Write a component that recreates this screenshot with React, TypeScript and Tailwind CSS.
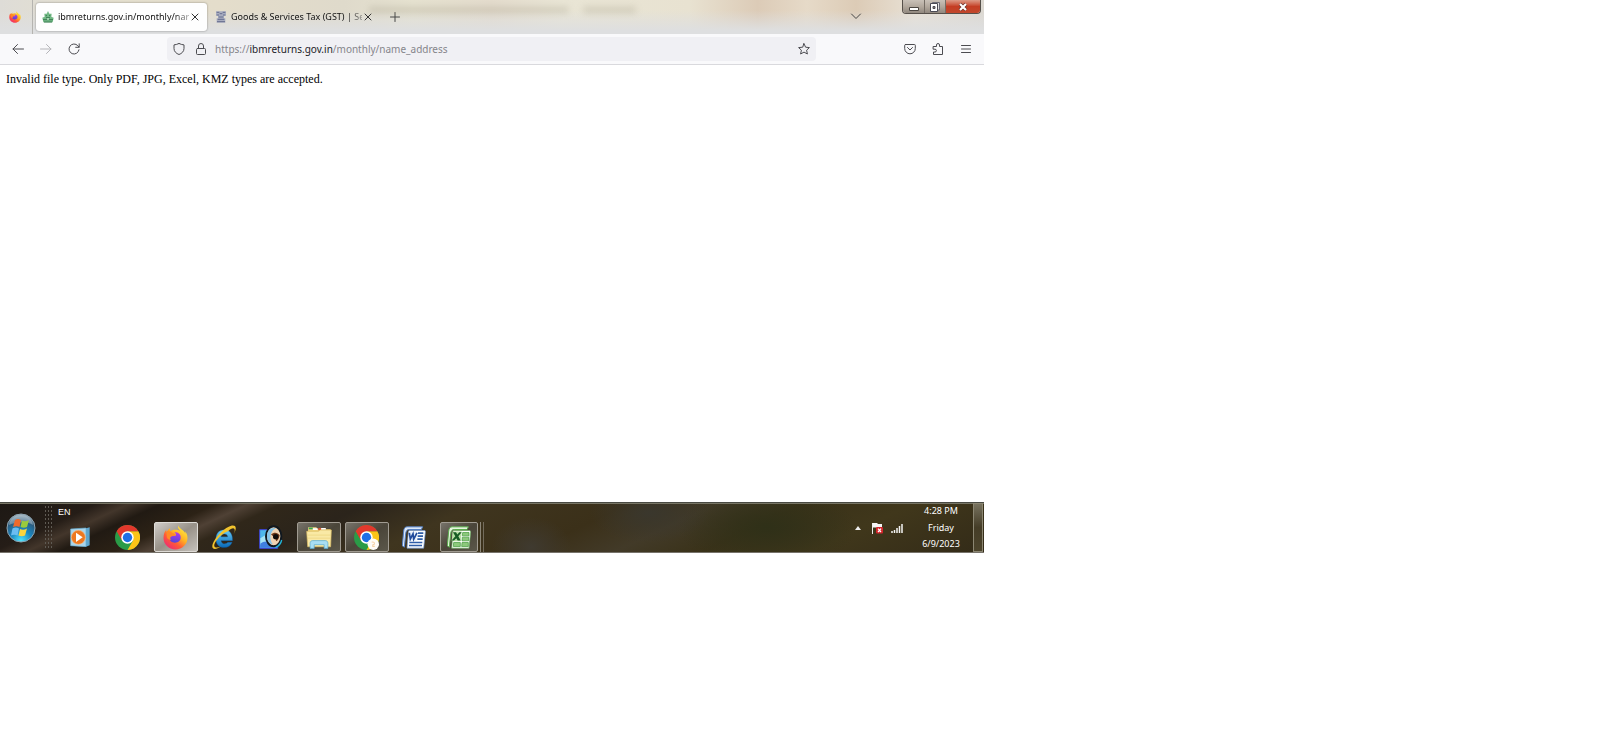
import type { ReactNode } from 'react';

function ChromeLogo({ children }: { children?: ReactNode }) {
  return (
    <svg viewBox="0 0 48 48" className="size-[25px]" aria-hidden="true">
      <circle cx="24" cy="24" r="24" fill="#2a9b47" />
      <path d="M24 12H44.8A24 24 0 0 1 24 48L34.4 30Z" fill="#fbc417" />
      <path d="M3.2 12A24 24 0 0 1 44.8 12H24L13.6 30Z" fill="#e2382c" />
      <circle cx="24" cy="24" r="12" fill="#fff" />
      <circle cx="24" cy="24" r="9" fill="#1f6fe5" />
      {children}
    </svg>
  );
}

function FirefoxLogo({ id, className }: { id: string; className: string }) {
  return (
    <svg viewBox="0 0 48 48" className={className} aria-hidden="true">
      <defs>
        <linearGradient id={id + 'a'} x1="0.85" y1="0.1" x2="0.2" y2="0.9">
          <stop offset="0" stopColor="#ffe83f" />
          <stop offset="0.4" stopColor="#ffb022" />
          <stop offset="0.7" stopColor="#ff5a37" />
          <stop offset="1" stopColor="#f0306c" />
        </linearGradient>
        <linearGradient id={id + 'b'} x1="0.6" y1="0" x2="0.4" y2="1">
          <stop offset="0" stopColor="#b13be8" />
          <stop offset="1" stopColor="#5146d8" />
        </linearGradient>
      </defs>
      <path d="M29 1c-1 5 1 7 4 10-2-1-6-2-9-2-5 0-8 1-10 3-1-2-1-4 0-6-3 1-5 4-7 7-1-1-1-3 0-5C3 12 1 18 1 25c0 12 10 22 23 22s23-10 23-22c0-6-2-10-5-13 1 2 1 4 1 5-2-7-11-9-14-16Z" fill={`url(#${id}a)`} />
      <path d="M22 14c8 0 12 4 12 10s-5 10-11 10-11-4-11-10c0-2 0-3 1-4 3-1 5 0 7 1l5-1c0-3-1-4-3-6Z" fill={`url(#${id}b)`} />
      <path d="M7 13c4-2 9 0 11 3 2 0 4 0 6 2-1 2-4 2-5 3-2 1-4 1-5 3 0 2 0 3 2 4-7 1-9-4-9-8 0-3 0-4 0-7Z" fill="#ff8a25" />
    </svg>
  );
}

function StartOrb() {
  return (
    <svg viewBox="0 0 60 60" className="size-[30px]" aria-hidden="true">
      <defs>
        <radialGradient id="orb" cx="0.5" cy="0.95" r="0.95">
          <stop offset="0" stopColor="#52e4fb" />
          <stop offset="0.4" stopColor="#1a86c0" />
          <stop offset="0.75" stopColor="#2d5a7c" />
          <stop offset="1" stopColor="#9dafba" />
        </radialGradient>
      </defs>
      <circle cx="30" cy="30" r="28" fill="url(#orb)" stroke="#8fa5b2" strokeWidth="2" />
      <path d="M6 24C8 10 19 4 30 4s22 6 24 20C42 16 20 18 6 24Z" fill="#d6e1e6" opacity="0.4" />
      <path d="M18 14c5-3 8-2 12 0l-3 14c-4-2-8-2-13 0Z" fill="#ee6a2c" />
      <path d="M32 15c4 2 9 2 14-1l-4 14c-4 2-9 2-13 0Z" fill="#9bcb3c" />
      <path d="M13 31c5-3 9-2 13 0l-3 14c-4-2-9-2-13 0Z" fill="#6bbdf2" />
      <path d="M28 32c4 2 9 2 14-1l-4 14c-4 2-9 2-13 0Z" fill="#fcd43c" />
    </svg>
  );
}

function MediaPlayerLogo() {
  return (
    <svg viewBox="0 0 60 60" className="size-5" aria-hidden="true">
      <path d="M48 4 59 1V55L48 59Z" fill="#5ea5cd" />
      <path d="M2 6 48 3V59L2 56Z" fill="#a9d5ec" stroke="#67acd0" strokeWidth="2" />
      <circle cx="25" cy="31" r="21" fill="#ed7821" stroke="#f9ba7f" strokeWidth="2" />
      <path d="M18 17 38 31 18 45Z" fill="#fff" />
    </svg>
  );
}

function ExplorerBrowserLogo() {
  return (
    <svg viewBox="0 0 72 72" className="size-[25px]" aria-hidden="true">
      <defs>
        <linearGradient id="ie" x1="0" y1="0" x2="0" y2="1">
          <stop offset="0" stopColor="#69cdf5" />
          <stop offset="1" stopColor="#0868b8" />
        </linearGradient>
      </defs>
      <path d="M62 45H29c1 6 5 9 10 9 4 0 7-1 9-4h13c-4 10-12 15-23 15-15 0-24-10-24-25s9-26 24-26 25 11 24 31ZM29 34h19c-1-6-5-8-10-8s-8 2-9 8Z" fill="url(#ie)" stroke="#0b4f92" />
      <path d="M50 17c7-6 14-10 17-6s1 10-3 16c8-10 9-20 5-24-7-5-23 2-39 17C10 39 0 58 5 66c4 5 13 3 23-4-9 4-16 4-18 0-3-6 5-20 19-32 8-7 15-11 21-13Z" fill="#f1c32e" />
    </svg>
  );
}

function EyeAppLogo() {
  return (
    <svg viewBox="0 0 72 72" className="size-6" aria-hidden="true">
      <path d="M2 14H56V70H2Z" fill="#4fb7ea" stroke="#3f43d4" strokeWidth="3" />
      <path d="M4 40 20 30 32 54 4 60Z" fill="#a4e3f5" />
      <path d="M4 56c12-10 24-8 50 2v10H4Z" fill="#3f7fe0" />
      <ellipse cx="44" cy="34" rx="23" ry="30" fill="#f0d3b2" stroke="#101820" strokeWidth="6" />
      <path d="M24 34c0-18 12-29 27-24-10 4-16 13-17 26 1 12 4 18 8 22-12-1-18-12-18-24Z" fill="#86c4e8" />
      <path d="M36 28c10-8 20-6 26 3-2 10-6 16-10 18-3-8-8-14-16-21Z" fill="#6c3718" />
      <circle cx="50" cy="35" r="8" fill="#100b09" />
      <path d="M50 67c9-4 16-12 18-22" fill="none" stroke="#23b5d8" strokeWidth="4" />
    </svg>
  );
}

function FolderLogo() {
  return (
    <svg viewBox="0 0 76 66" className="h-[23px] w-[26px]" aria-hidden="true">
      <path d="M6 3H30L35 9H72V34H6Z" fill="#eed27a" />
      <path d="M8 4H20V9H8Z" fill="#35a653" />
      <path d="M20 6H34V11H20ZM44 5H58V10H44Z" fill="#fff" />
      <path d="M36 5H44V12H36Z" fill="#d85536" />
      <path d="M2 15H36L42 11H74L72 60H5Z" fill="#f9e9a5" stroke="#dcbd63" strokeWidth="2" />
      <path d="M5 26H72M5 35H72" stroke="#ebd17c" strokeWidth="2" />
      <path d="M12 65V50c0-5 3-8 8-8h36c5 0 8 3 8 8v15H53V54H24v11Z" fill="#a8def4" stroke="#58a9d0" strokeWidth="2" />
    </svg>
  );
}

function WordLogo() {
  return (
    <svg viewBox="0 0 72 66" className="h-[23px] w-6" aria-hidden="true">
      <path d="M16 1H62L58 9H22C14 9 12 14 11 22L7 62 1 58 5 14C6 5 9 1 16 1Z" fill="#dbe8f8" stroke="#5580c4" strokeWidth="3" />
      <path d="M23 12H67C70 12 71 14 70 18L65 65H15L19 18C19 14 20 12 23 12Z" fill="#fbfdff" stroke="#6f95d0" strokeWidth="2" />
      <path d="M48 20H64M47 29H63M46 38H62M22 48H61M21 57H60" stroke="#2e5da8" strokeWidth="5" />
      <path d="M22 16H46L43 42H19Z" fill="#e6effa" />
      <path d="M22 19 25 38 33 22 35 38 45 19" fill="none" stroke="#204a9b" strokeWidth="5" />
    </svg>
  );
}

function ExcelLogo() {
  return (
    <svg viewBox="0 0 72 66" className="h-[23px] w-6" aria-hidden="true">
      <path d="M16 1H64L60 9H22C14 9 12 14 11 22L7 62 1 58 5 14C6 5 9 1 16 1Z" fill="#e4f5df" stroke="#5cab4e" strokeWidth="3" />
      <path d="M22 12H67C70 12 71 14 71 17L66 65H14L18 17C18 13 19 12 22 12Z" fill="#fafff8" stroke="#66ad5b" strokeWidth="2" />
      <path d="M47 18H66V28H46ZM46 32H65V43H45ZM20 48H40V60H19ZM45 48H64V60H44Z" fill="#8cc97b" stroke="#3f9638" strokeWidth="2" />
      <path d="M17 15H44L41 44H14Z" fill="#b9dfa5" />
      <path d="M18 17H27L31 24 37 17H44L34 29 41 42H32L28 35 21 42H14L25 29Z" fill="#175c25" />
    </svg>
  );
}

function LionEmblem() {
  return (
    <svg viewBox="0 0 36 36" className="size-3 shrink-0" aria-hidden="true">
      <path d="M3 1H33V14H27V22H31V35H5V22H9V14H3Z" fill="#a9adc0" />
      <path d="M5 4h8M23 4h8M14 8h8M5 12h7M24 12h7M11 18h14M8 25h20M6 32h24" stroke="#666e8e" strokeWidth="3" />
    </svg>
  );
}

function StarEmblem() {
  return (
    <svg viewBox="0 0 36 36" className="size-3 shrink-0" aria-hidden="true">
      <path d="M18 0 22 8H29L28 17 35 20 32 34H4L1 20 8 17 7 8H14Z" fill="#72b985" />
      <path d="M11 14h4M21 14h4M12 20h12M3 26h30M6 33h24" stroke="#3c7c52" strokeWidth="3" />
      <path d="M15 22h6v4h-6Z" fill="#bde0c5" />
    </svg>
  );
}

function Stroke({ d }: { d: string }) {
  return (
    <svg viewBox="0 0 12 12" className="size-3" fill="none" stroke="currentColor" strokeLinecap="round" strokeLinejoin="round" aria-hidden="true">
      <path d={d} />
    </svg>
  );
}

function Tab({ icon, title, active }: { icon: ReactNode; title: string; active?: boolean }) {
  return (
    <div className={active ? 'flex h-7 w-[171px] items-center rounded-[3px] bg-[#fefefe] px-1.5 shadow-[0_0_2px_rgba(0,0,0,0.45)]' : 'flex h-7 w-[171px] items-center px-1.5'}>
      {icon}
      <button type="button" className="ml-1 min-w-0 flex-1 bg-linear-to-r from-[#111] from-88% to-[#11111160] bg-clip-text text-left text-[9px] leading-4 whitespace-nowrap text-transparent">{title}</button>
      <button type="button" aria-label="Close tab" className="text-[#333]"><Stroke d="M3 3 9 9M9 3 3 9" /></button>
    </div>
  );
}

function TabStrip() {
  return (
    <header className="flex h-[34px] items-start bg-[linear-gradient(to_bottom,transparent_30%,#dedfe0_90%),linear-gradient(to_right,#dedcd7_0%,#e4e0cf_9%,#e4ddcb_22%,#dfdacb_35%,#e6e2d0_42%,#e4dccd_50%,#e9e5d5_57%,#e8e2d1_70%,#dccbb7_77%,#e6dac8_82%,#dccbb6_87%,#e8e1d5_93%,#dcd8d1_100%)]">
      <div className="flex h-full w-[33px] shrink-0 items-center justify-center border-r border-[#b5b4b0] pr-0.5">
        <FirefoxLogo id="tabfx" className="size-3" />
      </div>
      <div className="flex shrink-0 gap-0.5 pt-[3px] pl-[3px]">
        <Tab active icon={<StarEmblem />} title="ibmreturns.gov.in/monthly/nar" />
        <Tab icon={<LionEmblem />} title="Goods & Services Tax (GST) | Se" />
      </div>
      <button type="button" aria-label="New tab" className="ml-px flex size-7 shrink-0 items-center justify-center pt-1.5 text-[#444]"><Stroke d="M1.5 6H10.5M6 1.5V10.5" /></button>
      <div aria-hidden="true" className="-ml-10 mt-1.5 h-2 min-w-0 flex-1 bg-[linear-gradient(to_right,#8b8571_0%,#8b8571_41%,transparent_42%,transparent_44%,#8b8571_45%,#8b8571_55%,transparent_56%)] opacity-20 blur-[3px]" />
      <button type="button" aria-label="List all tabs" className="mt-2.5 mr-10 shrink-0 text-[#444]"><Stroke d="M1.5 4 6 8.5 10.5 4" /></button>
      <div className="mr-[3px] flex h-3.5 shrink-0 overflow-hidden rounded-b border border-t-0 border-[#56504a] text-white">
        <button type="button" aria-label="Minimize" className="flex w-[22px] items-center justify-center border-r border-[#756d65] bg-linear-to-b from-[#c9c1b8] via-[#b2a89d] to-[#91887e]">
          <svg viewBox="0 0 12 12" className="size-3" aria-hidden="true"><path d="M1.5 6.5h9v3h-9Z" fill="#fff" stroke="#4b4641" /></svg>
        </button>
        <button type="button" aria-label="Restore" className="flex w-[21px] items-center justify-center border-r border-[#756d65] bg-linear-to-b from-[#c9c1b8] via-[#b2a89d] to-[#91887e]">
          <svg viewBox="0 0 12 12" className="size-3" aria-hidden="true"><path d="M3.5 1.5h7V9h-7Z" fill="#ddd" stroke="#6b6b75" /><path d="M1.5 2.5h7v8h-7Z" fill="#fff" stroke="#4b4b55" /><path d="M4 5.5h2v2H4Z" fill="#8c8379" stroke="#4b4b55" /></svg>
        </button>
        <button type="button" aria-label="Close window" className="flex w-[34px] items-center justify-center bg-linear-to-b from-[#dc9a87] via-[#c43d24] to-[#c2482c]">
          <svg viewBox="0 0 12 12" className="size-3" aria-hidden="true"><path d="M3 3 9 9M9 3 3 9" stroke="#6c3029" strokeWidth="3.6" /><path d="M3 3 9 9M9 3 3 9" stroke="#fff" strokeWidth="2.2" /></svg>
        </button>
      </div>
    </header>
  );
}

function Toolbar() {
  return (
    <nav className="flex h-[31px] items-center border-b border-[#d9d9dd] bg-[#f9f9fb] px-3 text-[#4c4c51]">
      <div className="flex shrink-0 gap-4">
        <button type="button" aria-label="Back"><Stroke d="M11.5 6H1M5.5 1.5 1 6 5.5 10.5" /></button>
        <button type="button" aria-label="Forward" disabled className="text-[#b5b5b9]"><Stroke d="M.5 6H11M6.5 1.5 11 6 6.5 10.5" /></button>
        <button type="button" aria-label="Reload"><Stroke d="M11 6.8A5 5 0 1 1 9.8 2.7L11 4M11.2 .8V4.3H7.7" /></button>
      </div>
      <div className="mr-[88px] ml-[87px] flex h-6 min-w-0 flex-1 items-center rounded-sm bg-[#f0f0f4] px-1.5">
        <button type="button" aria-label="Tracking protection"><Stroke d="M6 .5C4.5 1.3 2.8 1.7 1 1.9V5.5C1 8.5 3.3 10.6 6 11.5 8.7 10.6 11 8.5 11 5.5V1.9C9.2 1.7 7.5 1.3 6 .5Z" /></button>
        <button type="button" aria-label="Site security" className="ml-2.5"><Stroke d="M2.5 5.5H9.5Q10.5 5.5 10.5 6.5V10.5Q10.5 11.5 9.5 11.5H2.5Q1.5 11.5 1.5 10.5V6.5Q1.5 5.5 2.5 5.5ZM3.5 5.5V3A2.5 2.5 0 0 1 8.5 3V5.5" /></button>
        <a href="https://ibmreturns.gov.in/monthly/name_address" className="ml-2 min-w-0 flex-1 truncate text-[10px] leading-4 text-[#85858b]">
          https://<span className="text-[#222227]">ibmreturns.gov.in</span>/monthly/name_address
        </a>
        <button type="button" aria-label="Bookmark this page"><Stroke d="M6 .7 7.6 4.2 11.4 4.6 8.6 7.2 9.4 11 6 9.1 2.6 11 3.4 7.2 .6 4.6 4.4 4.2Z" /></button>
      </div>
      <div className="flex shrink-0 gap-4">
        <button type="button" aria-label="Save to Pocket"><Stroke d="M1.5 1.5H10.5Q11.3 1.5 11.3 2.3V5.5A5.3 5.3 0 0 1 .7 5.5V2.3Q.7 1.5 1.5 1.5ZM3.5 4.5 6 7 8.5 4.5" /></button>
        <button type="button" aria-label="Extensions"><Stroke d="M1.5 3.5H4.5V2A1.5 1.5 0 0 1 7.5 2V3.5H10.5V11.5H1.5V9H3A1.3 1.3 0 0 0 3 6.2H1.5Z" /></button>
        <button type="button" aria-label="Application menu"><Stroke d="M1.5 2.5H10.5M1.5 6H10.5M1.5 9.5H10.5" /></button>
      </div>
    </nav>
  );
}

const plain = 'flex h-[30px] w-11 items-center justify-center';
const open = 'flex h-[30px] w-11 items-center justify-center rounded-[2px] border border-[#a09b91] bg-linear-to-br from-[#77736a] via-[#4a4539] to-[#5b574a]';

function Taskbar() {
  return (
    <footer className="flex h-[51px] border-y border-t-[#494a43] border-b-[#77736b] bg-[radial-gradient(ellipse_60px_30px_at_66%_20%,#3a372d,transparent),radial-gradient(ellipse_40px_30px_at_54%_90%,#3f3a30,transparent),radial-gradient(ellipse_90px_40px_at_78%_50%,#2f3018,transparent),linear-gradient(155deg,#1d1814_0%,#251d17_9%,#43362b_12%,#211a13_15%,#2c2216_20%,#4f4135_23%,#30271a_26%,#2b241b_34%,#3f351f_44%,#3b3019_58%,#423a28_66%,#3a3219_74%,#40371b_84%,#332b18_100%)] text-[9px] leading-4 text-white shadow-[inset_0_1px_0_#777565]">
      <button type="button" aria-label="Start" className="ml-1.5 flex shrink-0 items-center"><StartOrb /></button>
      <div aria-hidden="true" className="my-0.5 ml-2 w-2 shrink-0 bg-[radial-gradient(circle,#5f5a53_0_1px,transparent_1px)] bg-size-[3px_4px]" />
      <div className="ml-1.5 flex w-[426px] shrink-0 flex-col justify-between pt-px">
        <span className="font-['Liberation_Sans',sans-serif]">EN</span>
        <div className="flex justify-between">
          <button type="button" aria-label="Media Player" className={plain}><MediaPlayerLogo /></button>
          <button type="button" aria-label="Chrome" className={plain}><ChromeLogo /></button>
          <button type="button" aria-label="Firefox" className="flex h-[30px] w-11 items-center justify-center rounded-[2px] border border-[#dedbd6] bg-linear-to-br from-[#d0cdc9] via-[#989188] to-[#c5c1bb]"><FirefoxLogo id="taskfx" className="size-[25px]" /></button>
          <button type="button" aria-label="Internet Explorer" className={plain}><ExplorerBrowserLogo /></button>
          <button type="button" aria-label="Image viewer" className={plain}><EyeAppLogo /></button>
          <button type="button" aria-label="File Explorer" className={open}><FolderLogo /></button>
          <button type="button" aria-label="Chrome profile" className={open}>
            <ChromeLogo>
              <circle cx="37" cy="37" r="11" fill="#fffdf7" />
              <path d="M34 33c4-1 6 1 5 4l-3 1v3h4" fill="none" stroke="#f5d3a8" strokeWidth="2" />
            </ChromeLogo>
          </button>
          <button type="button" aria-label="Word" className={plain}><WordLogo /></button>
          <div className="flex gap-0.5">
            <button type="button" aria-label="Excel" className="flex h-[30px] w-[38px] items-center justify-center rounded-[2px] border border-[#a09b91] bg-linear-to-br from-[#77736a] via-[#4a4539] to-[#5b574a]"><ExcelLogo /></button>
            <span className="w-px bg-[#8b8577]" />
            <span className="w-px bg-[#736c5d]" />
          </div>
        </div>
      </div>
      <div className="ml-auto flex shrink-0 items-center gap-2">
        <button type="button" aria-label="Show hidden icons" className="mr-0.5">
          <svg viewBox="0 0 6 4" className="h-1 w-1.5" aria-hidden="true"><path d="M3 0 6 4H0Z" fill="#eee" /></svg>
        </button>
        <svg viewBox="0 0 12 12" className="size-3" aria-hidden="true">
          <path d="M1.5 1V12" stroke="#eee" />
          <path d="M2 1H6L7 2H11V6H6L5 5.5H2Z" fill="#f5f5f5" />
          <rect x="5" y="5" width="7" height="6.5" rx="1" fill="#d3262c" />
          <path d="M7 6.7 10 10M10 6.7 7 10" stroke="#fff" strokeWidth="1.2" />
        </svg>
        <svg viewBox="0 0 12 10" className="h-2.5 w-3" aria-hidden="true"><path d="M1 8V10M3.5 7V10M6 5V10M8.5 3V10M11 1V10" stroke="#f3f3f3" strokeWidth="1.5" /></svg>
      </div>
      <div className="mr-3.5 ml-5 flex w-9 shrink-0 flex-col items-center justify-between whitespace-nowrap">
        <span>4:28 PM</span>
        <span>Friday</span>
        <span>6/9/2023</span>
      </div>
      <button type="button" aria-label="Show desktop" className="mr-px w-2.5 shrink-0 border border-[#8b8672] bg-linear-to-b from-[#77725f] via-[#453d27] to-[#4c442c]" />
    </footer>
  );
}

export default function App() {
  return (
    <div className="min-h-screen bg-white font-['Noto_Sans',sans-serif]">
      <div className="flex w-[61.5%] min-w-[780px] flex-col">
        <TabStrip />
        <Toolbar />
        <main className="min-h-[437px] bg-white px-1.5 py-1.5 font-['Liberation_Serif',serif] text-[12px] leading-4 text-black">
          <p>Invalid file type. Only PDF, JPG, Excel, KMZ types are accepted.</p>
        </main>
        <Taskbar />
      </div>
    </div>
  );
}
